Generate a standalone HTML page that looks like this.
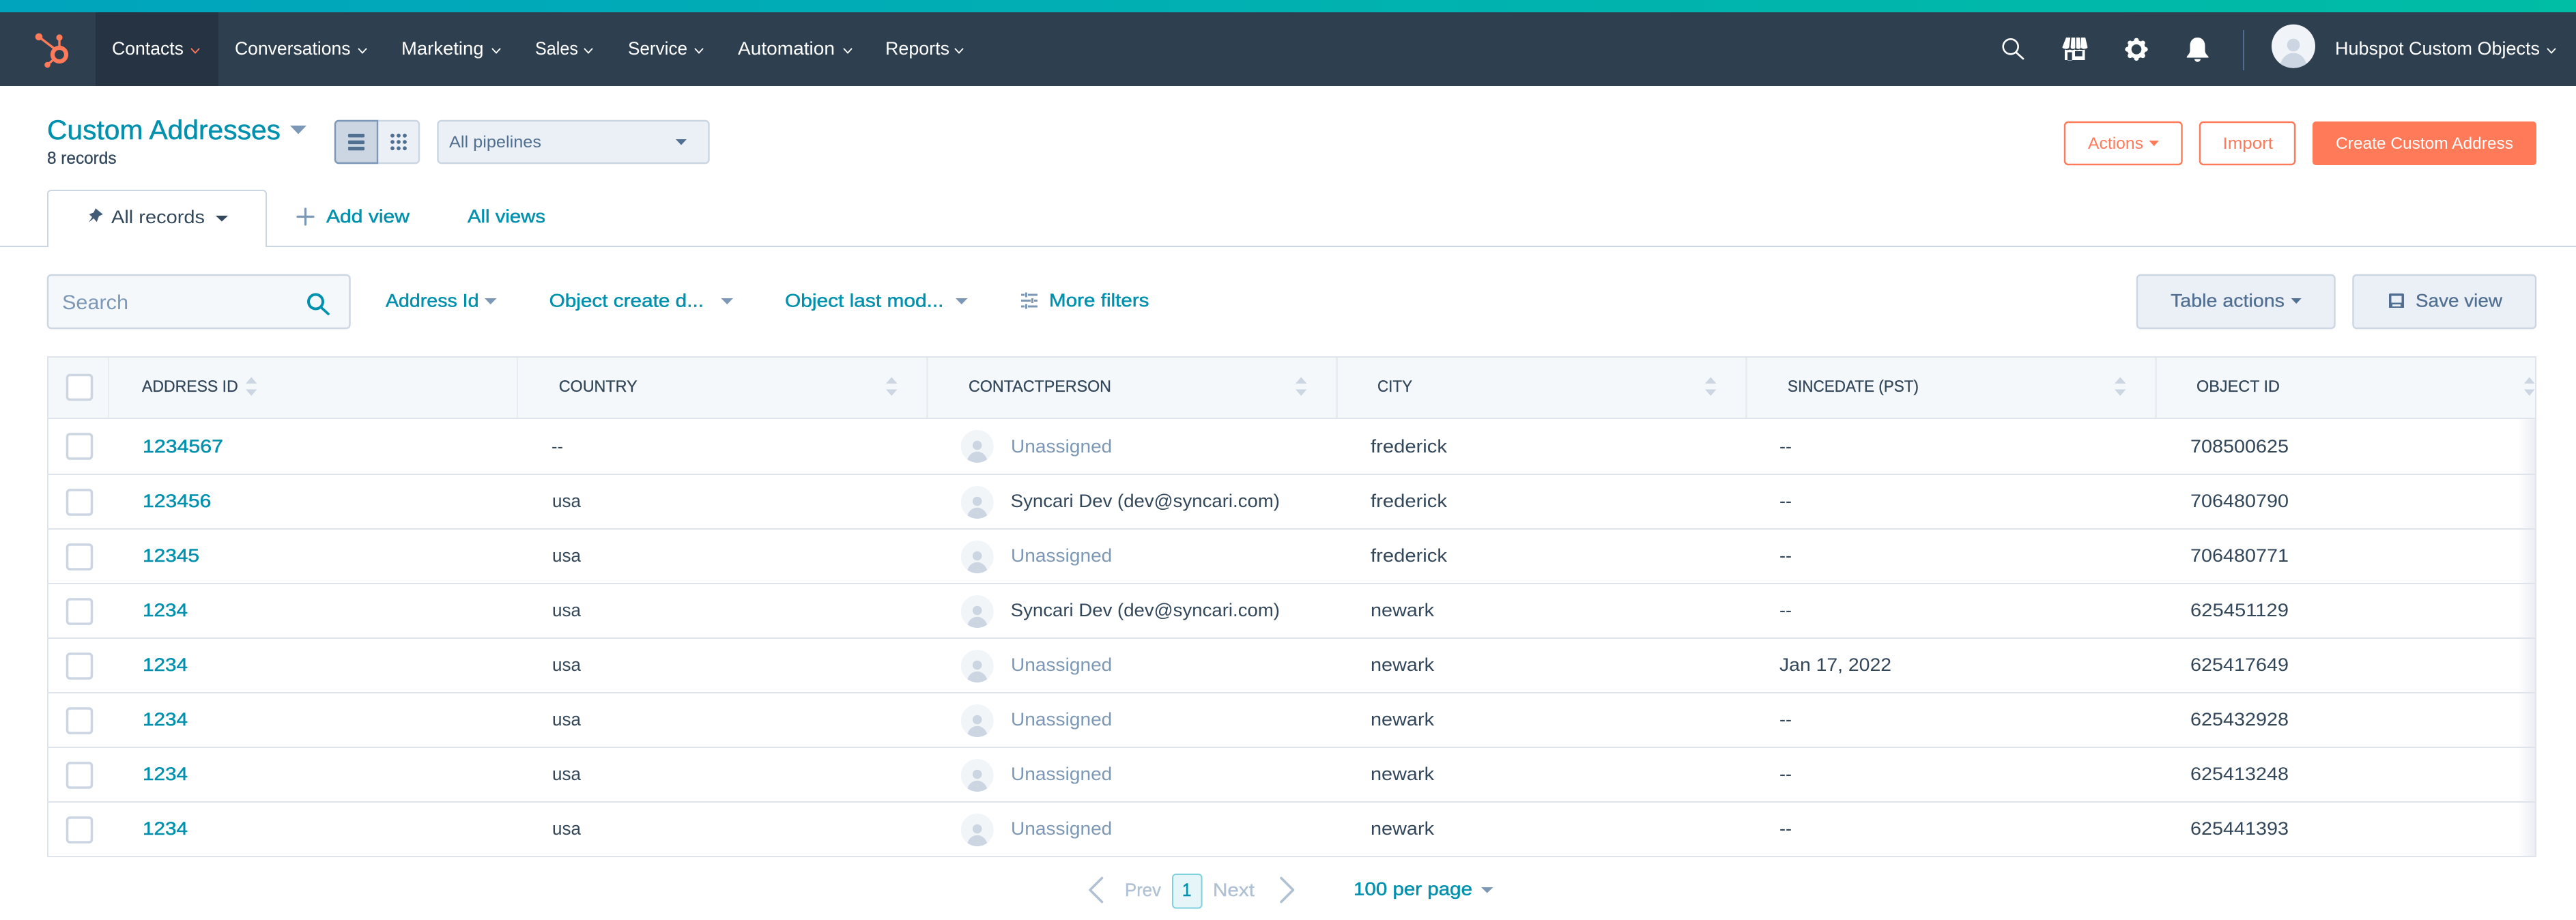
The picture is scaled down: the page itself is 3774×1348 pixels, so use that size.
<!DOCTYPE html>
<html lang="en">
<head>
<meta charset="utf-8">
<title>Custom Addresses</title>
<style>
html,body{margin:0;padding:0;background:#fff;width:3774px;height:1348px;overflow:hidden}
svg{display:block}
text{font-family:"Liberation Sans",sans-serif;font-size:27px;white-space:pre}
.w{fill:#fff}
.nv{fill:#fff}
.d{fill:#33475b}
.h{fill:#33475b;stroke:#33475b;stroke-width:.3px;font-size:24px}
.t{fill:#0091ae;stroke:#0091ae;stroke-width:.5px}
.u{fill:#7c98b6}
.g{fill:#516f90}
.o{fill:#ff7a59;font-size:24px}
.cb{fill:#fff;stroke:#cbd6e2;stroke-width:3.5px}
.rl{fill:#dfe3eb}
.sep{fill:#e8edf3}
.ar{fill:#cbd6e2}
.ca{fill:#7c98b6}
.chev{fill:none;stroke:#fff;stroke-width:1.8px}
</style>
</head>
<body>
<svg xmlns="http://www.w3.org/2000/svg" width="3774" height="1348" viewBox="0 0 3774 1348">
<defs>
<linearGradient id="tb" x1="0" x2="1" y1="0" y2="0"><stop offset="0" stop-color="#00a4bd"/><stop offset="1" stop-color="#00bda5"/></linearGradient>
<linearGradient id="fade" x1="0" x2="1" y1="0" y2="0"><stop offset="0" stop-color="#dfe3eb" stop-opacity="0"/><stop offset="1" stop-color="#dfe3eb" stop-opacity=".6"/></linearGradient>
<clipPath id="avc"><circle cx="0" cy="0" r="24"/></clipPath>
<clipPath id="avn"><circle cx="3360" cy="67.7" r="32"/></clipPath>
<g id="av"><circle r="24" fill="#f1f5f8"/><g clip-path="url(#avc)"><circle cy="-1.5" r="6.8" fill="#cbd6e2"/><ellipse cy="24" rx="15" ry="16.3" fill="#cbd6e2"/></g></g>
</defs>

<!-- top bar -->
<rect width="3774" height="18" fill="url(#tb)"/>
<rect y="18" width="3774" height="108" fill="#2e3f50"/>
<rect x="140" y="18" width="180" height="108" fill="#253342"/>

<!-- logo -->
<g fill="#ff7a59" stroke="none">
<line x1="57" y1="54" x2="82" y2="73" stroke="#ff7a59" stroke-width="3.4"/>
<line x1="87" y1="55" x2="87" y2="72" stroke="#ff7a59" stroke-width="3.4"/>
<line x1="69.3" y1="95" x2="80" y2="86" stroke="#ff7a59" stroke-width="3.4"/>
<circle cx="57" cy="54" r="5.3"/><circle cx="87" cy="55" r="4.6"/><circle cx="69.5" cy="95" r="4.3"/>
<circle cx="87" cy="80" r="10" fill="none" stroke="#ff7a59" stroke-width="6.2"/>
</g>

<!-- nav -->
<text class="nv" x="164" y="80" textLength="105" lengthAdjust="spacingAndGlyphs">Contacts</text>
<path d="M280 71l6 6.5 6-6.5" fill="none" stroke="#ff7a59" stroke-width="1.8"/>
<text class="nv" x="344" y="80" textLength="169.5" lengthAdjust="spacingAndGlyphs">Conversations</text>
<path class="chev" d="M525 71l6 6.5 6-6.5"/>
<text class="nv" x="588" y="80" textLength="120.5" lengthAdjust="spacingAndGlyphs">Marketing</text>
<path class="chev" d="M721 71l6 6.5 6-6.5"/>
<text class="nv" x="784" y="80" textLength="63" lengthAdjust="spacingAndGlyphs">Sales</text>
<path class="chev" d="M856 71l6 6.5 6-6.5"/>
<text class="nv" x="920" y="80" textLength="87" lengthAdjust="spacingAndGlyphs">Service</text>
<path class="chev" d="M1018 71l6 6.5 6-6.5"/>
<text class="nv" x="1081" y="80" textLength="142" lengthAdjust="spacingAndGlyphs">Automation</text>
<path class="chev" d="M1236 71l6 6.5 6-6.5"/>
<text class="nv" x="1297" y="80" textLength="94" lengthAdjust="spacingAndGlyphs">Reports</text>
<path class="chev" d="M1399 71l6 6.5 6-6.5"/>

<!-- nav right icons -->
<circle cx="2945.7" cy="68.3" r="11" fill="none" stroke="#fff" stroke-width="2.6"/>
<line x1="2954" y1="77" x2="2964" y2="86" stroke="#fff" stroke-width="2.8" stroke-linecap="round"/>
<g fill="#fff">
<path d="M3027 55h6.2l-1.8 14.2c-.2 1.6-2 2.4-4.6 2.4-3 0-5.5-1-5.3-2.6z"/>
<path d="M3034.7 55h5.5l.2 14.6c0 1.4-1.3 2-3.2 2-2 0-3.7-.8-3.6-2.4z"/>
<path d="M3041.9 55h5.5l1.1 14.2c.1 1.6-1.6 2.4-3.6 2.4-1.9 0-3.2-.6-3.1-2z"/>
<path d="M3049 55h6.1l3.3 14c.2 1.6-2.3 2.6-5.3 2.6-2.6 0-4-.8-4.2-2.4z"/>
<path fill-rule="evenodd" d="M3025 72.500c3 1 5.500 1 7.500 0 2 1.200 5 1.200 7 0 2 1.200 5 1.200 7 0 2 1 5 1 8 0V88h-29.500zM3029 76.500v12h6.700v-12zM3040 75v7.500h10.700V75z"/>
</g>
<g transform="translate(3130 72.300)" fill="#fff">
<circle r="10.300" fill="none" stroke="#fff" stroke-width="6"/>
<circle cx="0" cy="-13.200" r="3.500"/><circle cx="0" cy="13.200" r="3.500"/><circle cx="-13.200" cy="0" r="3.500"/><circle cx="13.200" cy="0" r="3.500"/>
<circle cx="-9.300" cy="-9.300" r="3.500"/><circle cx="9.300" cy="-9.300" r="3.500"/><circle cx="-9.300" cy="9.300" r="3.500"/><circle cx="9.300" cy="9.300" r="3.500"/>
</g>
<g fill="#fff">
<path d="M3219.500 55C3227 55 3230.500 61 3230.500 67L3230.500 74C3230.500 78 3233 80 3235.500 83L3235.500 84.500L3203.800 84.500L3203.800 83C3206 80 3208.500 78 3208.500 74L3208.500 67C3208.500 61 3212 55 3219.500 55Z"/>
<path d="M3215 86.500H3224C3224 89 3221.500 90.700 3219.500 90.700C3217.500 90.700 3215 89 3215 86.500Z"/>
</g>
<rect x="3286" y="44" width="2" height="59" fill="#4f6f92"/>
<circle cx="3360" cy="67.700" r="32" fill="#f0f3f7"/>
<g clip-path="url(#avn)"><circle cx="3360" cy="66" r="9.300" fill="#cbd6e2"/><ellipse cx="3360" cy="99" rx="19.500" ry="21.500" fill="#cbd6e2"/></g>
<text class="nv" x="3421" y="80" textLength="300" lengthAdjust="spacingAndGlyphs">Hubspot Custom Objects</text>
<path class="chev" d="M3732 71l6 6.500 6-6.500"/>

<!-- title -->
<text class="t" style="font-size:40px" x="69" y="204" textLength="342" lengthAdjust="spacingAndGlyphs">Custom Addresses</text>
<path class="ca" d="M425 184h24l-12 12.500z"/>
<text class="d" style="font-size:25px;stroke:#33475b;stroke-width:.3px" x="69" y="240" textLength="101.500" lengthAdjust="spacingAndGlyphs">8 records</text>

<!-- view toggle -->
<rect x="491" y="177" width="123" height="62" rx="5" fill="#eaf0f6" stroke="#cbd6e2" stroke-width="2.400"/>
<path d="M553 176H496a6 6 0 0 0-6 6v52a6 6 0 0 0 6 6h57z" fill="#cbd6e2"/>
<path d="M553 177H496a5 5 0 0 0-5 5v52a5 5 0 0 0 5 5h57z" fill="none" stroke="#7c98b6" stroke-width="2.400"/>
<g fill="#516f90"><rect x="510" y="196" width="24" height="5.400" rx="1.500"/><rect x="510" y="205.700" width="24" height="5.400" rx="1.500"/><rect x="510" y="215" width="24" height="5.400" rx="1.500"/></g>
<g fill="#516f90">
<circle cx="575" cy="198.700" r="2.900"/><circle cx="584" cy="198.700" r="2.900"/><circle cx="593" cy="198.700" r="2.900"/>
<circle cx="575" cy="208" r="2.900"/><circle cx="584" cy="208" r="2.900"/><circle cx="593" cy="208" r="2.900"/>
<circle cx="575" cy="217.300" r="2.900"/><circle cx="584" cy="217.300" r="2.900"/><circle cx="593" cy="217.300" r="2.900"/>
</g>

<!-- pipelines -->
<rect x="641.500" y="177" width="397" height="62" rx="5" fill="#eaf0f6" stroke="#cbd6e2" stroke-width="2.400"/>
<text class="g" style="font-size:24px" x="658" y="216" textLength="135" lengthAdjust="spacingAndGlyphs">All pipelines</text>
<path fill="#516f90" d="M990 204h16l-8 8.500z"/>

<!-- top right buttons -->
<rect x="3025" y="179" width="171.500" height="62" rx="5" fill="#fff" stroke="#ff7a59" stroke-width="2.400"/>
<text class="o" x="3059" y="218" textLength="81" lengthAdjust="spacingAndGlyphs">Actions</text>
<path fill="#ff7a59" d="M3148.500 206h14.500l-7.250 8z"/>
<rect x="3223" y="179" width="139" height="62" rx="5" fill="#fff" stroke="#ff7a59" stroke-width="2.400"/>
<text class="o" x="3256.500" y="218" textLength="73.500" lengthAdjust="spacingAndGlyphs">Import</text>
<rect x="3388" y="178" width="328" height="64" rx="5" fill="#ff7a59"/>
<text class="w" style="font-size:24px" x="3422" y="218" textLength="260" lengthAdjust="spacingAndGlyphs">Create Custom Address</text>

<!-- tabs -->
<rect x="0" y="360" width="3774" height="2" fill="#cbd6e2"/>
<path d="M70 362V284a5 5 0 0 1 5-5H385a5 5 0 0 1 5 5V362" fill="#fff" stroke="#cbd6e2" stroke-width="2"/>
<rect x="71" y="358" width="318" height="5" fill="#fff"/>
<path fill="#425b76" d="M140 305.300L150.700 314L145 316.700L141.700 325.300L137.300 320L130 325.700L135 318L130.700 314L137.300 311.300Z"/>
<text class="d" x="163" y="327" textLength="137" lengthAdjust="spacingAndGlyphs">All records</text>
<path fill="#33475b" d="M316 316h18l-9 8.500z"/>
<path d="M447.500 306v23M436 317.500h23" stroke="#7c98b6" stroke-width="3.200" stroke-linecap="round"/>
<text class="t" x="478" y="326" textLength="122" lengthAdjust="spacingAndGlyphs">Add view</text>
<text class="t" x="685" y="326" textLength="114" lengthAdjust="spacingAndGlyphs">All views</text>

<!-- filter row -->
<rect x="70" y="403" width="442.500" height="78" rx="5" fill="#f5f8fa" stroke="#cbd6e2" stroke-width="2.400"/>
<text class="u" style="font-size:30px" x="91" y="453" textLength="97" lengthAdjust="spacingAndGlyphs">Search</text>
<circle cx="462.500" cy="442" r="10.500" fill="none" stroke="#0091ae" stroke-width="4"/>
<line x1="470" y1="450" x2="481" y2="460" stroke="#0091ae" stroke-width="3.600" stroke-linecap="round"/>
<text class="t" x="565" y="449.500" textLength="136.500" lengthAdjust="spacingAndGlyphs">Address Id</text>
<path class="ca" d="M710 437h17.500l-8.750 9z"/>
<text class="t" x="804.600" y="449.500" textLength="226.400" lengthAdjust="spacingAndGlyphs">Object create d...</text>
<path class="ca" d="M1056.500 437h17.500l-8.750 9z"/>
<text class="t" x="1150" y="449.500" textLength="232.500" lengthAdjust="spacingAndGlyphs">Object last mod...</text>
<path class="ca" d="M1400 437h17.500l-8.750 9z"/>
<g fill="#7c98b6">
<rect x="1496" y="430.500" width="5" height="3"/><rect x="1506" y="430.500" width="14" height="3"/><rect x="1502" y="428.500" width="3" height="7"/>
<rect x="1496" y="439" width="14" height="3"/><rect x="1515" y="439" width="5" height="3"/><rect x="1511" y="437" width="3" height="7"/>
<rect x="1496" y="447.500" width="5" height="3"/><rect x="1506" y="447.500" width="14" height="3"/><rect x="1502" y="445.500" width="3" height="7"/>
</g>
<text class="t" x="1537" y="449" textLength="146.500" lengthAdjust="spacingAndGlyphs">More filters</text>

<rect x="3131" y="403" width="289.500" height="78" rx="5" fill="#eaf0f6" stroke="#cbd6e2" stroke-width="2.400"/>
<text class="g" style="stroke:#516f90;stroke-width:.3px" x="3180" y="449.500" textLength="167" lengthAdjust="spacingAndGlyphs">Table actions</text>
<path fill="#516f90" d="M3356.700 437h15l-7.500 8z"/>
<rect x="3447.500" y="403" width="267.500" height="78" rx="5" fill="#eaf0f6" stroke="#cbd6e2" stroke-width="2.400"/>
<path fill-rule="evenodd" fill="#516f90" d="M3502 430h18a2 2 0 0 1 2 2v19h-22v-19a2 2 0 0 1 2-2zM3503.500 433.500v10h15v-10zM3505 446v3h12v-3z"/>
<text class="g" style="stroke:#516f90;stroke-width:.3px" x="3539" y="449.500" textLength="127" lengthAdjust="spacingAndGlyphs">Save view</text>

<!-- table header -->
<rect x="69" y="522" width="3647" height="92" fill="#f5f8fa"/>
<rect x="69" y="522" width="3647" height="2" class="rl"/>
<rect x="69" y="612" width="3647" height="2" class="rl"/>
<rect x="69" y="522" width="2" height="734" class="rl"/>
<rect x="3714" y="522" width="2" height="734" class="rl"/>
<rect x="3689" y="614" width="25" height="640" fill="url(#fade)"/>
<rect x="158" y="524" width="2" height="88" class="sep"/>
<rect x="757" y="524" width="2" height="88" class="sep"/>
<rect x="1357" y="524" width="3" height="88" class="sep"/>
<rect x="1957" y="524" width="3" height="88" class="sep"/>
<rect x="2557" y="524" width="3" height="88" class="sep"/>
<rect x="3157" y="524" width="3" height="88" class="sep"/>

<rect class="cb" x="98.500" y="549.500" width="36" height="36" rx="4"/>
<text class="h" x="208" y="574" textLength="140.700" lengthAdjust="spacingAndGlyphs">ADDRESS ID</text>
<g class="ar"><path d="M360 562l8.250-9.500L376.500 562zM360 570.500h16.500L368.250 580z"/></g>
<text class="h" x="818.700" y="574" textLength="115" lengthAdjust="spacingAndGlyphs">COUNTRY</text>
<g class="ar"><path d="M1298 562l8.250-9.500L1314.500 562zM1298 570.500h16.500L1306.250 580z"/></g>
<text class="h" x="1419" y="574" textLength="209" lengthAdjust="spacingAndGlyphs">CONTACTPERSON</text>
<g class="ar"><path d="M1898 562l8.250-9.500L1914.500 562zM1898 570.500h16.500L1906.250 580z"/></g>
<text class="h" x="2018" y="574" textLength="51" lengthAdjust="spacingAndGlyphs">CITY</text>
<g class="ar"><path d="M2498 562l8.250-9.500L2514.500 562zM2498 570.500h16.500L2506.250 580z"/></g>
<text class="h" x="2619" y="574" textLength="192" lengthAdjust="spacingAndGlyphs">SINCEDATE (PST)</text>
<g class="ar"><path d="M3098 562l8.250-9.500L3114.500 562zM3098 570.500h16.500L3106.250 580z"/></g>
<text class="h" x="3218" y="574" textLength="122" lengthAdjust="spacingAndGlyphs">OBJECT ID</text>
<g class="ar"><path d="M3698 562l7.750-9.500L3713.500 562zM3698 570.500h15.500L3705.750 580z"/></g>

<!-- row lines -->
<rect class="rl" x="69" y="694" width="3647" height="2"/>
<rect class="rl" x="69" y="774" width="3647" height="2"/>
<rect class="rl" x="69" y="854" width="3647" height="2"/>
<rect class="rl" x="69" y="934" width="3647" height="2"/>
<rect class="rl" x="69" y="1014" width="3647" height="2"/>
<rect class="rl" x="69" y="1094" width="3647" height="2"/>
<rect class="rl" x="69" y="1174" width="3647" height="2"/>
<rect class="rl" x="69" y="1254" width="3647" height="2"/>

<!-- row 1 -->
<rect class="cb" x="98.500" y="636" width="36" height="36" rx="4"/>
<text class="t" x="209" y="663" textLength="118" lengthAdjust="spacingAndGlyphs">1234567</text>
<text class="d" x="808" y="663" textLength="17" lengthAdjust="spacingAndGlyphs">--</text>
<use href="#av" x="1431.700" y="654"/>
<text class="u" x="1481" y="663" textLength="148.300" lengthAdjust="spacingAndGlyphs">Unassigned</text>
<text class="d" x="2008" y="663" textLength="112" lengthAdjust="spacingAndGlyphs">frederick</text>
<text class="d" x="2607" y="663" textLength="18" lengthAdjust="spacingAndGlyphs">--</text>
<text class="d" x="3209" y="663" textLength="144" lengthAdjust="spacingAndGlyphs">708500625</text>

<!-- row 2 -->
<rect class="cb" x="98.500" y="718" width="36" height="36" rx="4"/>
<text class="t" x="209" y="743" textLength="100.400" lengthAdjust="spacingAndGlyphs">123456</text>
<text class="d" x="809" y="743" textLength="42" lengthAdjust="spacingAndGlyphs">usa</text>
<use href="#av" x="1431.700" y="736"/>
<text class="d" x="1480.700" y="743" textLength="394.300" lengthAdjust="spacingAndGlyphs">Syncari Dev (dev@syncari.com)</text>
<text class="d" x="2008" y="743" textLength="112" lengthAdjust="spacingAndGlyphs">frederick</text>
<text class="d" x="2607" y="743" textLength="18" lengthAdjust="spacingAndGlyphs">--</text>
<text class="d" x="3209" y="743" textLength="144" lengthAdjust="spacingAndGlyphs">706480790</text>

<!-- row 3 -->
<rect class="cb" x="98.500" y="798" width="36" height="36" rx="4"/>
<text class="t" x="209" y="823" textLength="83" lengthAdjust="spacingAndGlyphs">12345</text>
<text class="d" x="809" y="823" textLength="42" lengthAdjust="spacingAndGlyphs">usa</text>
<use href="#av" x="1431.700" y="816"/>
<text class="u" x="1481" y="823" textLength="148.300" lengthAdjust="spacingAndGlyphs">Unassigned</text>
<text class="d" x="2008" y="823" textLength="112" lengthAdjust="spacingAndGlyphs">frederick</text>
<text class="d" x="2607" y="823" textLength="18" lengthAdjust="spacingAndGlyphs">--</text>
<text class="d" x="3209" y="823" textLength="144" lengthAdjust="spacingAndGlyphs">706480771</text>

<!-- row 4 -->
<rect class="cb" x="98.500" y="878" width="36" height="36" rx="4"/>
<text class="t" x="209" y="903" textLength="66" lengthAdjust="spacingAndGlyphs">1234</text>
<text class="d" x="809" y="903" textLength="42" lengthAdjust="spacingAndGlyphs">usa</text>
<use href="#av" x="1431.700" y="896"/>
<text class="d" x="1480.700" y="903" textLength="394.300" lengthAdjust="spacingAndGlyphs">Syncari Dev (dev@syncari.com)</text>
<text class="d" x="2008" y="903" textLength="93" lengthAdjust="spacingAndGlyphs">newark</text>
<text class="d" x="2607" y="903" textLength="18" lengthAdjust="spacingAndGlyphs">--</text>
<text class="d" x="3209" y="903" textLength="144" lengthAdjust="spacingAndGlyphs">625451129</text>

<!-- row 5 -->
<rect class="cb" x="98.500" y="958" width="36" height="36" rx="4"/>
<text class="t" x="209" y="983" textLength="66" lengthAdjust="spacingAndGlyphs">1234</text>
<text class="d" x="809" y="983" textLength="42" lengthAdjust="spacingAndGlyphs">usa</text>
<use href="#av" x="1431.700" y="976"/>
<text class="u" x="1481" y="983" textLength="148.300" lengthAdjust="spacingAndGlyphs">Unassigned</text>
<text class="d" x="2008" y="983" textLength="93" lengthAdjust="spacingAndGlyphs">newark</text>
<text class="d" x="2607" y="983" textLength="164" lengthAdjust="spacingAndGlyphs">Jan 17, 2022</text>
<text class="d" x="3209" y="983" textLength="144" lengthAdjust="spacingAndGlyphs">625417649</text>

<!-- row 6 -->
<rect class="cb" x="98.500" y="1038" width="36" height="36" rx="4"/>
<text class="t" x="209" y="1063" textLength="66" lengthAdjust="spacingAndGlyphs">1234</text>
<text class="d" x="809" y="1063" textLength="42" lengthAdjust="spacingAndGlyphs">usa</text>
<use href="#av" x="1431.700" y="1056"/>
<text class="u" x="1481" y="1063" textLength="148.300" lengthAdjust="spacingAndGlyphs">Unassigned</text>
<text class="d" x="2008" y="1063" textLength="93" lengthAdjust="spacingAndGlyphs">newark</text>
<text class="d" x="2607" y="1063" textLength="18" lengthAdjust="spacingAndGlyphs">--</text>
<text class="d" x="3209" y="1063" textLength="144" lengthAdjust="spacingAndGlyphs">625432928</text>

<!-- row 7 -->
<rect class="cb" x="98.500" y="1118" width="36" height="36" rx="4"/>
<text class="t" x="209" y="1143" textLength="66" lengthAdjust="spacingAndGlyphs">1234</text>
<text class="d" x="809" y="1143" textLength="42" lengthAdjust="spacingAndGlyphs">usa</text>
<use href="#av" x="1431.700" y="1136"/>
<text class="u" x="1481" y="1143" textLength="148.300" lengthAdjust="spacingAndGlyphs">Unassigned</text>
<text class="d" x="2008" y="1143" textLength="93" lengthAdjust="spacingAndGlyphs">newark</text>
<text class="d" x="2607" y="1143" textLength="18" lengthAdjust="spacingAndGlyphs">--</text>
<text class="d" x="3209" y="1143" textLength="144" lengthAdjust="spacingAndGlyphs">625413248</text>

<!-- row 8 -->
<rect class="cb" x="98.500" y="1198" width="36" height="36" rx="4"/>
<text class="t" x="209" y="1223" textLength="66" lengthAdjust="spacingAndGlyphs">1234</text>
<text class="d" x="809" y="1223" textLength="42" lengthAdjust="spacingAndGlyphs">usa</text>
<use href="#av" x="1431.700" y="1216"/>
<text class="u" x="1481" y="1223" textLength="148.300" lengthAdjust="spacingAndGlyphs">Unassigned</text>
<text class="d" x="2008" y="1223" textLength="93" lengthAdjust="spacingAndGlyphs">newark</text>
<text class="d" x="2607" y="1223" textLength="18" lengthAdjust="spacingAndGlyphs">--</text>
<text class="d" x="3209" y="1223" textLength="144" lengthAdjust="spacingAndGlyphs">625441393</text>

<!-- pagination -->
<path d="M1614.500 1286.500L1597 1304L1614.500 1321.500" fill="none" stroke="#b0c1d4" stroke-width="3.600" stroke-linecap="round" stroke-linejoin="round"/>
<text style="fill:#b0c1d4;stroke:#b0c1d4;stroke-width:.4px" x="1648" y="1313" textLength="53" lengthAdjust="spacingAndGlyphs">Prev</text>
<rect x="1718" y="1281" width="42.600" height="49.500" rx="5" fill="#e5f5f8" stroke="#7fd1de" stroke-width="2"/>
<text class="t" x="1732" y="1313" textLength="13.500" lengthAdjust="spacingAndGlyphs">1</text>
<text style="fill:#b0c1d4;stroke:#b0c1d4;stroke-width:.4px" x="1777" y="1313" textLength="61" lengthAdjust="spacingAndGlyphs">Next</text>
<path d="M1877 1286.500L1894.500 1304L1877 1321.500" fill="none" stroke="#b0c1d4" stroke-width="3.600" stroke-linecap="round" stroke-linejoin="round"/>
<text class="t" x="1983" y="1311.500" textLength="174" lengthAdjust="spacingAndGlyphs">100 per page</text>
<path class="ca" d="M2170 1300h17.500l-8.750 8.500z"/>
</svg>
</body>
</html>
